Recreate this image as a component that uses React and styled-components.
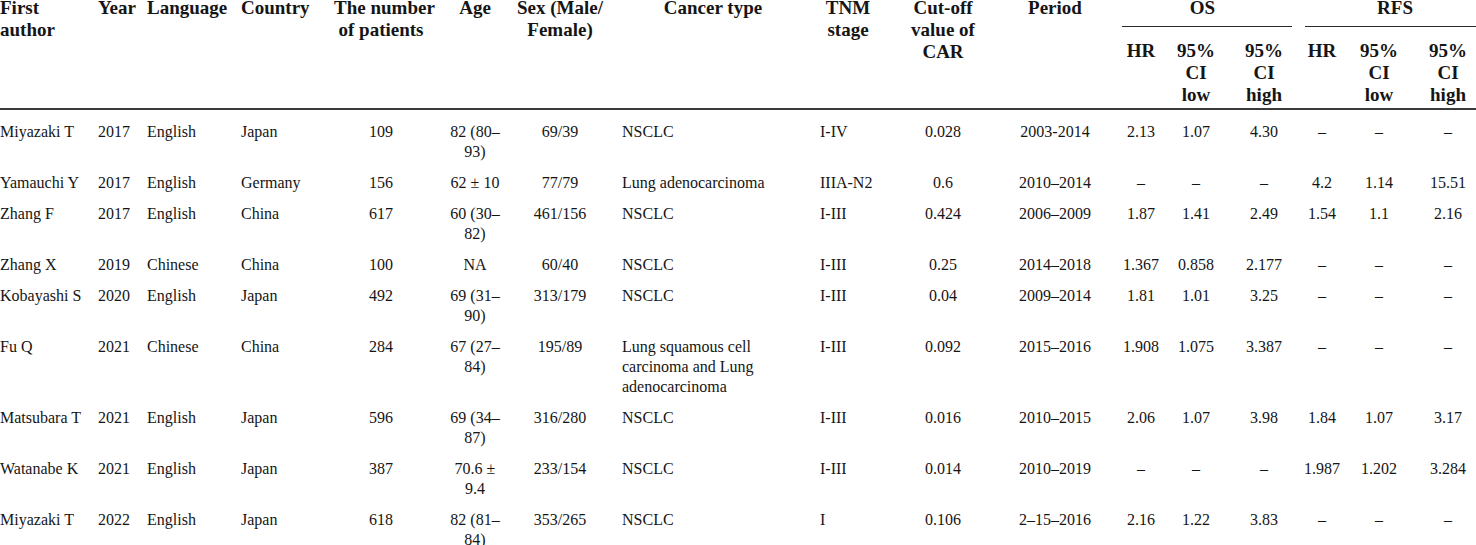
import React from "react";
import styled, { createGlobalStyle } from "styled-components";

const GlobalStyle = createGlobalStyle`
  html, body {
    margin: 0;
    padding: 0;
    background: #ffffff;
    overflow: hidden;
  }
`;

const columns = [
  { w: 92, align: "left", pl: 0 },
  { w: 50, align: "left", pl: 6 },
  { w: 94, align: "left", pl: 5 },
  { w: 90, align: "left", pl: 5 },
  { w: 102, align: "center", pl: 8 },
  { w: 89, align: "center", pl: 5 },
  { w: 89, align: "center", pr: 3 },
  { w: 214, align: "left", pl: 16, headAlign: "center", headPl: 0 },
  { w: 56, align: "left", pl: 0, headAlign: "center" },
  { w: 123, align: "center", pl: 11 },
  { w: 99, align: "center", pl: 13 },
  { w: 70, align: "center", pl: 16 },
  { w: 62, align: "center", pr: 6 },
  { w: 63, align: "center", pl: 5 },
  { w: 57, align: "center", pl: 1 },
  { w: 63, align: "center", pr: 5 },
  { w: 63, align: "center", pl: 7 },
];

const mainHeads = [
  "First\nauthor",
  "Year",
  "Language",
  "Country",
  "The number\nof patients",
  "Age",
  "Sex (Male/\nFemale)",
  "Cancer type",
  "TNM\nstage",
  "Cut-off\nvalue of\nCAR",
  "Period",
];

const groups = [
  { label: "OS", pl: 15, lineLeft: 24, lineRight: 1 },
  { label: "RFS", pl: 21, lineLeft: 12, lineRight: 0 },
];

const subHeads = ["HR", "95%\nCI\nlow", "95%\nCI\nhigh"];

const rows = [
  ["Miyazaki T", "2017", "English", "Japan", "109", "82 (80–\n93)", "69/39", "NSCLC", "I-IV", "0.028", "2003-2014", "2.13", "1.07", "4.30", "–", "–", "–"],
  ["Yamauchi Y", "2017", "English", "Germany", "156", "62 ± 10", "77/79", "Lung adenocarcinoma", "IIIA-N2", "0.6", "2010–2014", "–", "–", "–", "4.2", "1.14", "15.51"],
  ["Zhang F", "2017", "English", "China", "617", "60 (30–\n82)", "461/156", "NSCLC", "I-III", "0.424", "2006–2009", "1.87", "1.41", "2.49", "1.54", "1.1", "2.16"],
  ["Zhang X", "2019", "Chinese", "China", "100", "NA", "60/40", "NSCLC", "I-III", "0.25", "2014–2018", "1.367", "0.858", "2.177", "–", "–", "–"],
  ["Kobayashi S", "2020", "English", "Japan", "492", "69 (31–\n90)", "313/179", "NSCLC", "I-III", "0.04", "2009–2014", "1.81", "1.01", "3.25", "–", "–", "–"],
  ["Fu Q", "2021", "Chinese", "China", "284", "67 (27–\n84)", "195/89", "Lung squamous cell\ncarcinoma and Lung\nadenocarcinoma", "I-III", "0.092", "2015–2016", "1.908", "1.075", "3.387", "–", "–", "–"],
  ["Matsubara T", "2021", "English", "Japan", "596", "69 (34–\n87)", "316/280", "NSCLC", "I-III", "0.016", "2010–2015", "2.06", "1.07", "3.98", "1.84", "1.07", "3.17"],
  ["Watanabe K", "2021", "English", "Japan", "387", "70.6 ±\n9.4", "233/154", "NSCLC", "I-III", "0.014", "2010–2019", "–", "–", "–", "1.987", "1.202", "3.284"],
  ["Miyazaki T", "2022", "English", "Japan", "618", "82 (81–\n84)", "353/265", "NSCLC", "I", "0.106", "2–15–2016", "2.16", "1.22", "3.83", "–", "–", "–"],
];

const Table = styled.table`
  width: 1476px;
  margin-top: -3px;
  border-collapse: collapse;
  table-layout: fixed;
  font-family: "Liberation Serif", "Times New Roman", serif;
  color: #151515;

  thead {
    border-bottom: 2px solid #3a3a3a;
  }
`;

const HeadCell = styled.th`
  vertical-align: top;
  text-align: ${(p) => p.$align};
  padding: ${(p) => `0 ${p.$pr || 0}px 0 ${p.$pl || 0}px`};
  font-size: 19px;
  line-height: 22px;
  font-weight: 700;
  white-space: pre;
`;

const SubCell = styled(HeadCell)`
  padding-top: 13px;
  padding-bottom: 2px;
`;

const GroupCell = styled.th`
  padding: 0;
  vertical-align: top;
  font-size: 19px;
  line-height: 22px;
  font-weight: 700;
`;

const GroupLabel = styled.div`
  padding: 0 0 7px ${(p) => p.$pl}px;
  margin: 0 ${(p) => p.$right}px 0 ${(p) => p.$left}px;
  border-bottom: 1px solid #2a2a2a;
  text-align: center;
  text-indent: ${(p) => p.$pl - p.$left}px;
  padding-left: 0;
`;

const Row = styled.tr`
  &:first-child td {
    padding-top: 11.5px;
  }
`;

const Cell = styled.td`
  vertical-align: top;
  text-align: ${(p) => p.$align};
  padding: ${(p) => `5px ${p.$pr || 0}px 6px ${p.$pl || 0}px`};
  font-size: 16px;
  line-height: 20px;
  white-space: pre;
`;

export default function App() {
  return (
    <>
      <GlobalStyle />
      <Table>
        <colgroup>
          {columns.map((c, i) => (
            <col key={i} style={{ width: c.w }} />
          ))}
        </colgroup>
        <thead>
          <tr>
            {mainHeads.map((h, i) => {
              const c = columns[i];
              return (
                <HeadCell
                  key={h}
                  rowSpan={2}
                  $align={c.headAlign || c.align}
                  $pl={c.headPl !== undefined ? c.headPl : c.pl}
                  $pr={c.pr}
                >
                  {h}
                </HeadCell>
              );
            })}
            {groups.map((g) => (
              <GroupCell key={g.label} colSpan={3}>
                <GroupLabel $pl={g.pl} $left={g.lineLeft} $right={g.lineRight}>
                  {g.label}
                </GroupLabel>
              </GroupCell>
            ))}
          </tr>
          <tr>
            {[0, 1].map((gi) =>
              subHeads.map((h, j) => {
                const c = columns[11 + gi * 3 + j];
                return (
                  <SubCell key={`${gi}-${j}`} $align={c.align} $pl={c.pl} $pr={c.pr}>
                    {h}
                  </SubCell>
                );
              })
            )}
          </tr>
        </thead>
        <tbody>
          {rows.map((r, ri) => (
            <Row key={ri}>
              {r.map((v, i) => {
                const c = columns[i];
                return (
                  <Cell key={i} $align={c.align} $pl={c.pl} $pr={c.pr}>
                    {v}
                  </Cell>
                );
              })}
            </Row>
          ))}
        </tbody>
      </Table>
    </>
  );
}
